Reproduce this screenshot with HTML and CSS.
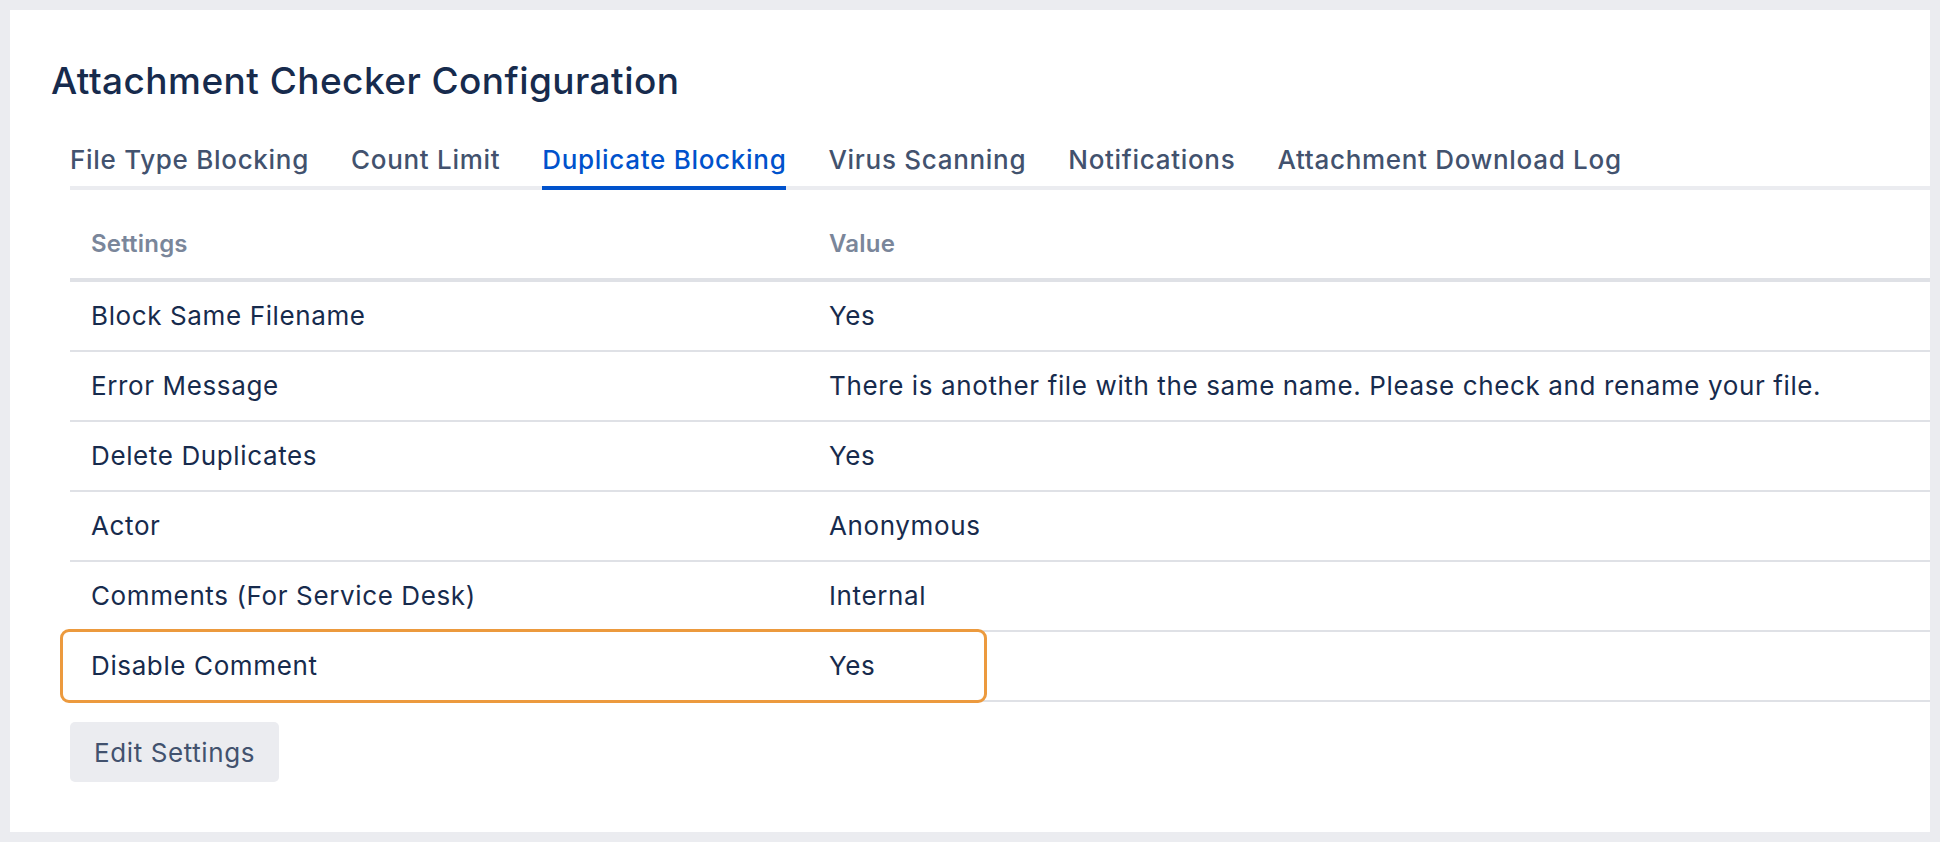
FILE: index.html
```html
<!DOCTYPE html>
<html lang="en">
<head>
<meta charset="utf-8">
<title>Attachment Checker Configuration</title>
<link rel="stylesheet" href="styles.css">
</head>
<body>
<main class="panel">
  <h1 class="title">Attachment Checker Configuration</h1>
  <div class="content">
    <nav class="tabs">
      <a class="tab">File Type Blocking</a>
      <a class="tab">Count Limit</a>
      <a class="tab active">Duplicate Blocking</a>
      <a class="tab">Virus Scanning</a>
      <a class="tab">Notifications</a>
      <a class="tab">Attachment Download Log</a>
    </nav>
    <div class="table-wrap">
      <table class="settings">
        <thead>
          <tr><th class="col-name">Settings</th><th>Value</th></tr>
        </thead>
        <tbody>
          <tr><td>Block Same Filename</td><td>Yes</td></tr>
          <tr><td>Error Message</td><td>There is another file with the same name. Please check and rename your file.</td></tr>
          <tr><td>Delete Duplicates</td><td>Yes</td></tr>
          <tr><td>Actor</td><td>Anonymous</td></tr>
          <tr><td>Comments (For Service Desk)</td><td>Internal</td></tr>
          <tr><td>Disable Comment</td><td>Yes</td></tr>
        </tbody>
      </table>
      <div class="highlight"></div>
    </div>
    <button class="btn">Edit Settings</button>
  </div>
</main>
</body>
</html>
```

FILE: styles.css
```css
html, body {
  margin: 0;
  padding: 0;
}
body {
  background: #ebecf0;
  padding: 10px;
  font-family: Inter, "Liberation Sans", sans-serif;
  color: #172b4d;
}
.panel {
  background: #ffffff;
  height: 822px;
  box-sizing: border-box;
  padding: 49px 0 0 41px;
}
.title {
  margin: 0;
  font-size: 37px;
  line-height: 44px;
  font-weight: 500;
  letter-spacing: 0.45px;
  color: #172b4d;
}
.content {
  margin-left: 19px;
}
.tabs {
  display: flex;
  gap: 42px;
  margin-top: 41px;
  border-bottom: 4px solid #ebecf0;
}
.tab {
  font-size: 26px;
  line-height: 32px;
  font-weight: 500;
  letter-spacing: 0.7px;
  color: #42526e;
  padding-bottom: 10px;
  border-bottom: 4px solid transparent;
  margin-bottom: -4px;
  white-space: nowrap;
}
.tab.active {
  color: #0052cc;
  border-bottom-color: #0052cc;
}
.table-wrap {
  position: relative;
  margin-top: 19px;
}
.settings {
  width: 100%;
  border-collapse: separate;
  border-spacing: 0;
  font-size: 26px;
  letter-spacing: 0.62px;
}
.settings th {
  text-align: left;
  font-size: 24px;
  line-height: 27px;
  font-weight: 600;
  letter-spacing: 0.2px;
  color: #7a869a;
  padding: 21px 21px;
  border-bottom: 4px solid #dfe1e6;
}
.settings th.col-name {
  width: 696px;
}
.settings td {
  line-height: 32px;
  padding: 18px 21px;
  border-bottom: 2px solid #dfe1e6;
  color: #172b4d;
  white-space: nowrap;
}
.highlight {
  position: absolute;
  left: -10px;
  top: 420px;
  width: 927px;
  height: 74px;
  box-sizing: border-box;
  border: 3px solid #ec9a3e;
  border-radius: 9px;
}
.btn {
  display: block;
  margin-top: 20px;
  height: 60px;
  padding: 0 24px;
  border: none;
  border-radius: 5px;
  background: #ebecf0;
  color: #42526e;
  font-family: Inter, "Liberation Sans", sans-serif;
  font-size: 26px;
  font-weight: 400;
  letter-spacing: 0.6px;
}
```
